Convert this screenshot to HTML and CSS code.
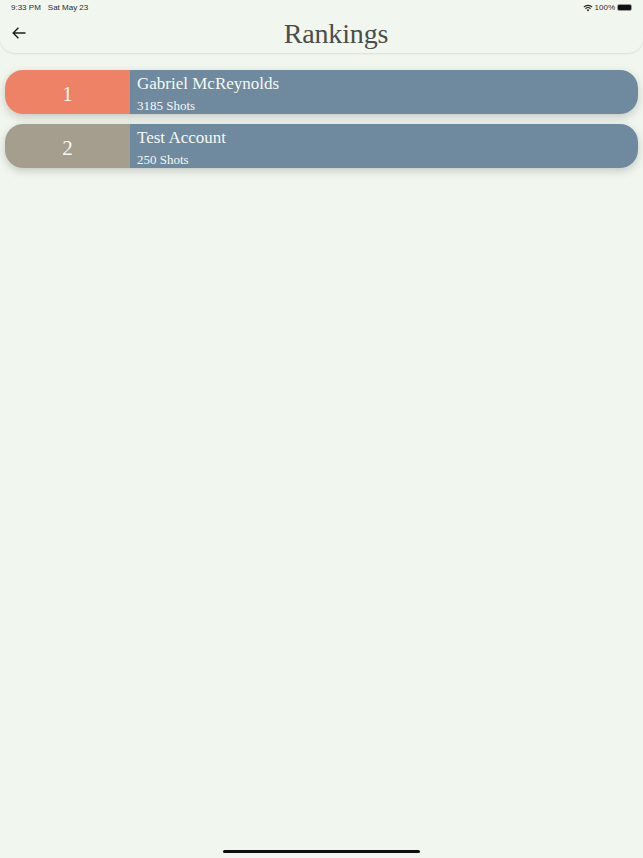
FILE: index.html
```html
<!DOCTYPE html>
<html lang="en">
<head>
<meta charset="utf-8">
<title>Rankings</title>
<link rel="stylesheet" href="styles.css">
</head>
<body>
<div class="screen">
  <header class="header">
    <div class="status">
      <div class="status-left"><span>9:33 PM</span><span>Sat May 23</span></div>
      <div class="status-right">
        <svg class="wifi" viewBox="0 0 12 9" aria-hidden="true"><path d="M6 8.6 4.4 6.9a2.3 2.3 0 0 1 3.2 0Z" fill="#222"/><path d="M2.9 5.4a4.4 4.4 0 0 1 6.2 0M1 3.4a7.1 7.1 0 0 1 10 0" fill="none" stroke="#222" stroke-width="1.3"/></svg>
        <span>100%</span>
        <span class="battery"><span class="battery-fill"></span></span>
      </div>
    </div>
    <div class="titlebar">
      <svg class="back" viewBox="0 0 14 12" aria-hidden="true"><path d="M13.5 6H1.2M6.4 .8 1.2 6l5.2 5.2" fill="none" stroke="#1d1f1d" stroke-width="1.4"/></svg>
      <h1 class="title">Rankings</h1>
    </div>
  </header>
  <main class="list">
    <div class="row">
      <div class="rank rank-first">1</div>
      <div class="info">
        <div class="name">Gabriel McReynolds</div>
        <div class="shots">3185 Shots</div>
      </div>
    </div>
    <div class="row">
      <div class="rank rank-second">2</div>
      <div class="info">
        <div class="name">Test Account</div>
        <div class="shots">250 Shots</div>
      </div>
    </div>
  </main>
  <div class="home-bar"></div>
</div>
</body>
</html>
```
FILE: styles.css
```css
* { box-sizing: border-box; }
html, body { margin: 0; padding: 0; height: 100%; }
body { background: #f1f6ef; overflow: hidden; }
.screen { height: 858px; display: flex; flex-direction: column; }
.header {
  height: 53px;
  border-radius: 0 0 15px 15px;
  background: #f1f6ef;
  box-shadow: 0 1px 2px rgba(60, 70, 60, .13);
}
.status {
  height: 14px;
  padding: 1px 11px 0 11px;
  display: flex;
  justify-content: space-between;
  align-items: center;
  font: 8px/10px "Liberation Sans", Arial, sans-serif;
  color: #2b2d2b;
}
.status-left { display: flex; gap: 7px; }
.status-right { display: flex; align-items: center; gap: 2px; }
.wifi { width: 10px; height: 8px; }
.battery {
  width: 15px; height: 7px;
  border: 1px solid #999;
  border-radius: 2px;
  display: block;
}
.battery-fill { display: block; height: 100%; background: #111; border-radius: 1px; }
.titlebar { position: relative; height: 39px; padding-left: 29px; display: flex; justify-content: center; align-items: center; }
.back { position: absolute; left: 12px; top: 13px; width: 14px; height: 12px; }
.title {
  margin: 0;
  font: 400 28px/39px "Liberation Serif", "Times New Roman", serif;
  color: #4a4d4a;
  letter-spacing: -.15px;
}
.list { padding: 17px 5px 0; display: flex; flex-direction: column; gap: 10px; }
.row {
  height: 44px;
  display: flex;
  border-radius: 18px;
  overflow: hidden;
  box-shadow: 0 3px 8px rgba(80, 90, 80, .28);
  font-family: "Liberation Serif", "Times New Roman", serif;
  color: #f6f8f2;
}
.rank {
  width: 125px;
  display: flex;
  align-items: center;
  justify-content: center;
  font-size: 21px;
  padding-top: 4px;
}
.rank-first { background: #ee8267; }
.rank-second { background: #a59e8e; }
.info { flex: 1; background: #6f8a9f; padding: 3px 7px; }
.name { font-size: 17px; line-height: 21px; }
.shots { font-size: 13px; line-height: 16px; margin-top: 4px; }
.home-bar {
  width: 197px;
  height: 3px;
  margin: auto auto 5px;
  border-radius: 2px;
  background: #0c0f0c;
}
```
